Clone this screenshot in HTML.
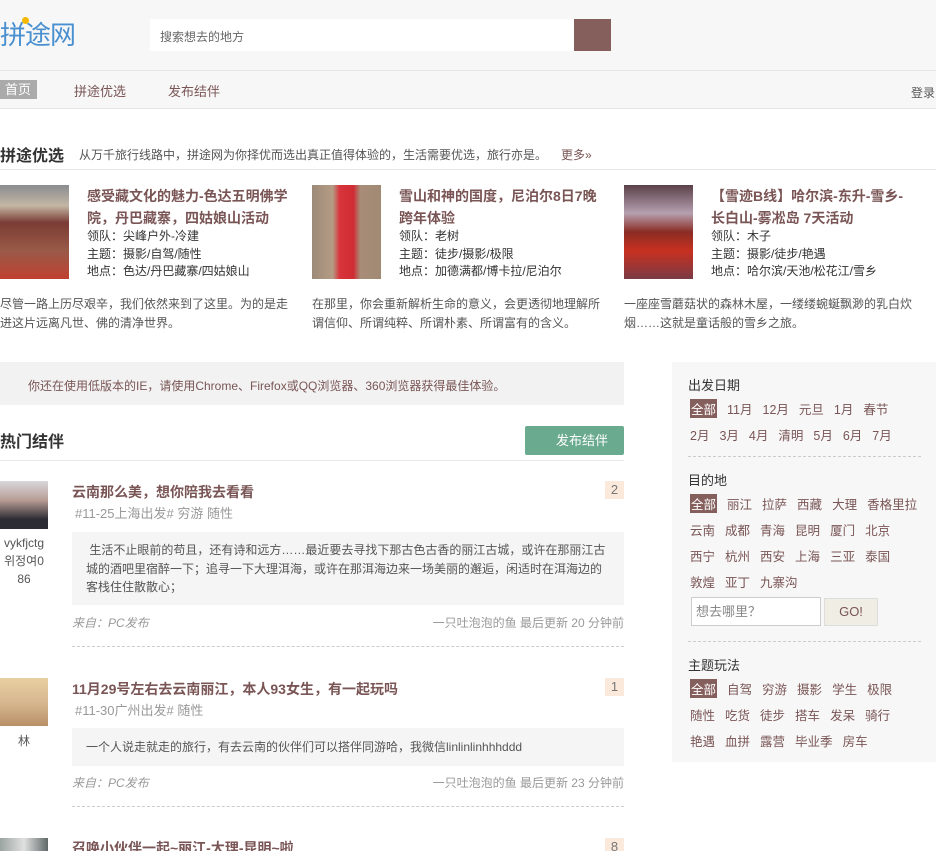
<!DOCTYPE html>
<html><head><meta charset="utf-8"><style>
*{margin:0;padding:0;box-sizing:border-box}
html{width:936px;height:851px;overflow:hidden}
body{width:936px;height:851px;overflow:hidden;background:#fff;font-family:"Liberation Sans","Noto Sans CJK SC",sans-serif;color:#333;position:relative;font-size:12px}
.a{position:absolute;white-space:nowrap}
.br{color:#7a5555}
.hdr{position:absolute;left:0;top:0;width:936px;height:109px;background:#f7f7f7;border-bottom:1px solid #e6e6e6}
.hl{position:absolute;left:0;top:70px;width:936px;height:1px;background:#e6e6e6}
.img{position:absolute;width:69px;height:94px;top:185px}
.ct{position:absolute;top:185px;font-size:14px;font-weight:bold;color:#7a5555;line-height:22px;width:204px;white-space:normal}
.cm{position:absolute;font-size:12px;line-height:17.5px;color:#333;top:228px}
.cd{position:absolute;top:295px;width:296px;font-size:12px;line-height:19px;color:#555}
.side{position:absolute;left:672px;top:362px;width:264px;height:400px;background:#f7f7f7}
.sh{position:absolute;left:16px;font-size:13px;color:#333}
.row{position:absolute;left:18px;display:flex;gap:10px;font-size:12.5px;color:#7a5555}
.row .on{background:#845f5c;color:#fff;padding:0 1px}
.dash{position:absolute;left:16px;width:233px;border-top:1px dashed #ccc}
.pt{position:absolute;left:72px;font-size:14px;font-weight:bold;color:#7a5555}
.tg{position:absolute;left:75px;font-size:13px;color:#999}
.bx{position:absolute;left:72px;width:552px;background:#f5f5f5;font-size:12px;color:#555;line-height:18.5px;padding:9px 14px}
.ft{position:absolute;left:72px;width:552px;font-size:12px;color:#999}
.ft i{float:left}.ft span{float:right}
.bd{position:absolute;left:605px;width:19px;height:18px;background:#fbe9dc;color:#777;text-align:center;font-size:13px;line-height:18px}
.dl{position:absolute;left:72px;width:552px;border-top:1px dashed #ccc}
.av{position:absolute;left:0;width:48px;height:48px}
.un{position:absolute;width:48px;text-align:center;font-size:12px;color:#555;line-height:18px}
</style></head><body>
<div class="hdr"></div><div class="hl"></div>
<div class="a" style="left:0;top:15px;font-size:26px;color:#4a90d0;letter-spacing:-1px">拼途网</div>
<div class="a" style="left:22px;top:17px;width:7px;height:7px;border-radius:50%;background:#f5b800"></div>
<div class="a" style="left:150px;top:19px;width:424px;height:32px;background:#fff"></div>
<div class="a" style="left:160px;top:28px;font-size:12px;color:#666">搜索想去的地方</div>
<div class="a" style="left:574px;top:19px;width:37px;height:32px;background:#845f5c"></div>
<div class="a" style="left:0;top:80px;width:37px;height:19px;background:#aaa;color:#fff;font-size:13px;line-height:19px;padding-left:5px">首页</div>
<div class="a br" style="left:74px;top:81px;font-size:13px">拼途优选</div>
<div class="a br" style="left:168px;top:81px;font-size:13px">发布结伴</div>
<div class="a" style="left:911px;top:84px;font-size:12px;color:#555">登录</div>

<div class="a" style="left:0;top:142px;font-size:16px;font-weight:bold;color:#333">拼途优选</div>
<div class="a" style="left:79px;top:146px;font-size:12px;color:#555">从万千旅行线路中，拼途网为你择优而选出真正值得体验的，生活需要优选，旅行亦是。</div>
<div class="a br" style="left:561px;top:146px;font-size:12px">更多»</div>
<div class="a" style="left:0;top:169px;width:936px;height:1px;background:#e8e8e8"></div>

<div class="img" style="left:0;background:linear-gradient(180deg,#8a8c90 0%,#c4b6a4 22%,#7a3c34 40%,#9a5a48 70%,#c04030 100%)"></div>
<div class="ct" style="left:87px">感受藏文化的魅力-色达五明佛学院，丹巴藏寨，四姑娘山活动</div>
<div class="cm" style="left:87px">领队：尖峰户外-冷建<br>主题：摄影/自驾/随性<br>地点：色达/丹巴藏寨/四姑娘山</div>
<div class="cd" style="left:0">尽管一路上历尽艰辛，我们依然来到了这里。为的是走进这片远离凡世、佛的清净世界。</div>

<div class="img" style="left:312px;background:linear-gradient(90deg,#9c8a78,#b49c84 30%,#d8343c 40%,#d02c34 60%,#a88c78 70%,#a08a74)"></div>
<div class="ct" style="left:399px;width:200px">雪山和神的国度，尼泊尔8日7晚跨年体验</div>
<div class="cm" style="left:399px">领队：老树<br>主题：徒步/摄影/极限<br>地点：加德满都/博卡拉/尼泊尔</div>
<div class="cd" style="left:312px">在那里，你会重新解析生命的意义，会更透彻地理解所谓信仰、所谓纯粹、所谓朴素、所谓富有的含义。</div>

<div class="img" style="left:624px;background:linear-gradient(180deg,#5a4048 0%,#b6a0b0 30%,#8a2c24 50%,#c83020 70%,#7a3a44 100%)"></div>
<div class="ct" style="left:711px;width:196px">【雪迹B线】哈尔滨-东升-雪乡-长白山-雾凇岛 7天活动</div>
<div class="cm" style="left:711px">领队：木子<br>主题：摄影/徒步/艳遇<br>地点：哈尔滨/天池/松花江/雪乡</div>
<div class="cd" style="left:624px">一座座雪蘑菇状的森林木屋，一缕缕蜿蜒飘渺的乳白炊烟……这就是童话般的雪乡之旅。</div>

<div class="a" style="left:0;top:362px;width:624px;height:43px;background:#f2f2f2"></div>
<div class="a br" style="left:28px;top:377px;font-size:12px">你还在使用低版本的IE，请使用Chrome、Firefox或QQ浏览器、360浏览器获得最佳体验。</div>

<div class="a" style="left:0;top:428px;font-size:16px;font-weight:bold;color:#333">热门结伴</div>
<div class="a" style="left:525px;top:426px;width:99px;height:29px;background:#6aaa8f;border-radius:2px;color:#fff;font-size:13px;line-height:29px;padding-left:31px">发布结伴</div>
<div class="a" style="left:0;top:460px;width:624px;height:1px;background:#e8e8e8"></div>

<div class="av" style="top:481px;background:linear-gradient(180deg,#d8d8dc,#b89c94 40%,#2c2c34 80%)"></div>
<div class="un" style="top:534px">vykfjctg<br>위정여0<br>86</div>
<div class="pt" style="top:482px">云南那么美，想你陪我去看看</div>
<div class="bd" style="top:481px">2</div>
<div class="tg" style="top:503px">#11-25上海出发# 穷游 随性</div>
<div class="bx" style="top:532px;height:73px">&nbsp;生活不止眼前的苟且，还有诗和远方……最近要去寻找下那古色古香的丽江古城，或许在那丽江古城的酒吧里宿醉一下；追寻一下大理洱海，或许在那洱海边来一场美丽的邂逅，闲适时在洱海边的客栈住住散散心；</div>
<div class="ft" style="top:614px"><i>来自：PC发布</i><span>一只吐泡泡的鱼 最后更新 20 分钟前</span></div>
<div class="dl" style="top:646px"></div>

<div class="av" style="top:678px;background:linear-gradient(180deg,#e8d0a0,#d8b890 50%,#b89068)"></div>
<div class="un" style="top:732px">林</div>
<div class="pt" style="top:679px">11月29号左右去云南丽江，本人93女生，有一起玩吗</div>
<div class="bd" style="top:678px">1</div>
<div class="tg" style="top:700px">#11-30广州出发# 随性</div>
<div class="bx" style="top:728px;height:38px;line-height:20px">一个人说走就走的旅行，有去云南的伙伴们可以搭伴同游哈，我微信linlinlinhhhddd</div>
<div class="ft" style="top:774px"><i>来自：PC发布</i><span>一只吐泡泡的鱼 最后更新 23 分钟前</span></div>
<div class="dl" style="top:806px"></div>

<div class="av" style="top:838px;height:13px;background:linear-gradient(90deg,#9aa4a0,#e0e0e0,#606868)"></div>
<div class="pt" style="top:838px">召唤小伙伴一起~丽江-大理-昆明~啦</div>
<div class="bd" style="top:838px;height:13px">8</div>

<div class="side">
<div class="sh" style="top:13px">出发日期</div>
<div class="row" style="top:37px"><span class="on">全部</span><span>11月</span><span>12月</span><span>元旦</span><span>1月</span><span>春节</span></div>
<div class="row" style="top:63px"><span>2月</span><span>3月</span><span>4月</span><span>清明</span><span>5月</span><span>6月</span><span>7月</span></div>
<div class="dash" style="top:94px"></div>
<div class="sh" style="top:108px">目的地</div>
<div class="row" style="top:132px"><span class="on">全部</span><span>丽江</span><span>拉萨</span><span>西藏</span><span>大理</span><span>香格里拉</span></div>
<div class="row" style="top:158px"><span>云南</span><span>成都</span><span>青海</span><span>昆明</span><span>厦门</span><span>北京</span></div>
<div class="row" style="top:184px"><span>西宁</span><span>杭州</span><span>西安</span><span>上海</span><span>三亚</span><span>泰国</span></div>
<div class="row" style="top:210px"><span>敦煌</span><span>亚丁</span><span>九寨沟</span></div>
<div class="a" style="left:19px;top:235px;width:130px;height:29px;background:#fff;border:1px solid #ccc;font-size:13px;color:#888;line-height:27px;padding-left:4px">想去哪里？</div>
<div class="a" style="left:152px;top:236px;width:54px;height:28px;background:#efede4;border:1px solid #ddd;font-size:13px;color:#7a5555;line-height:26px;text-align:center">GO!</div>
<div class="dash" style="top:279px"></div>
<div class="sh" style="top:293px">主题玩法</div>
<div class="row" style="top:317px"><span class="on">全部</span><span>自驾</span><span>穷游</span><span>摄影</span><span>学生</span><span>极限</span></div>
<div class="row" style="top:343px"><span>随性</span><span>吃货</span><span>徒步</span><span>搭车</span><span>发呆</span><span>骑行</span></div>
<div class="row" style="top:369px"><span>艳遇</span><span>血拼</span><span>露营</span><span>毕业季</span><span>房车</span></div>
</div>
</body></html>
